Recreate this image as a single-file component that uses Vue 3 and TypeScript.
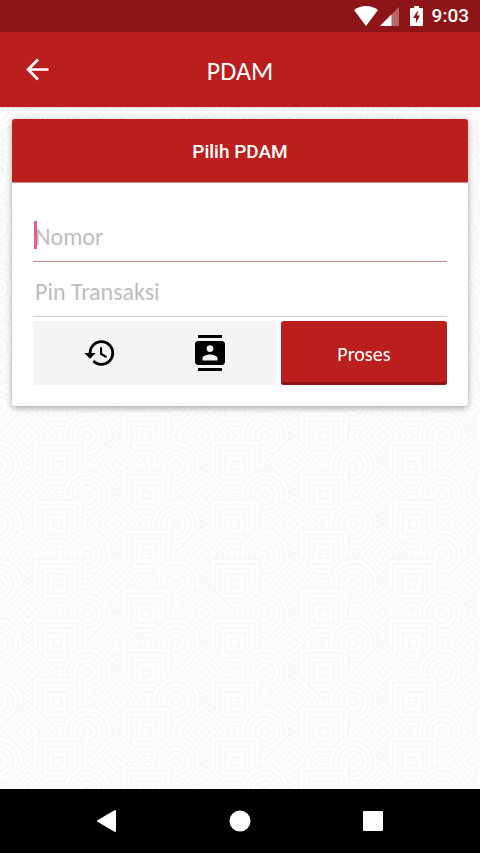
<script setup lang="ts">
import { ref } from 'vue'

type Shape = { kind: 'diamond' | 'square' | 'circle'; x: number; y: number }

const nomor = ref('')
const pin = ref('')

const kinds: Shape['kind'][] = ['diamond', 'square', 'circle']
const rings = [25, 20, 15, 10, 4]

// Shapes overlap like roof tiles, so they are listed from top to bottom.
const shapes: Shape[] = []
for (let row = -2; row <= 4; row++) {
  for (let col = -2; col <= 8; col++) {
    if ((row + col) % 2 === 0) {
      shapes.push({ kind: kinds[(col + 3) % 3], x: col * 30, y: row * 30 })
    }
  }
}

function diamond(x: number, y: number, r: number): string {
  const d = r * 1.25
  return `M${x} ${y - d}L${x + d} ${y}L${x} ${y + d}L${x - d} ${y}Z`
}
</script>

<template>
  <div class="screen">
    <div class="status">
      <svg class="wifi" viewBox="0 0 24 20" aria-hidden="true">
        <path d="M12 20L0 4C7-1.300 17-1.300 24 4Z" />
      </svg>
      <svg class="signal" viewBox="0 0 19 19" aria-hidden="true">
        <path d="M19 0V19H0Z" opacity=".35" />
        <path d="M11.500 7.500V19H0Z" />
      </svg>
      <svg class="battery" viewBox="0 0 13 20" aria-hidden="true">
        <path d="M4 0H9V2H12Q13 2 13 3V19Q13 20 12 20H1Q0 20 0 19V3Q0 2 1 2H4Z" />
        <path class="bolt" d="M8 4L3 12H6V17L10 9.500H7.200Z" />
      </svg>
      <time class="clock">9:03</time>
    </div>

    <header class="bar">
      <button class="back" type="button" aria-label="Kembali">
        <svg viewBox="0 0 24 24" aria-hidden="true"><path d="M22.500 11.500H2.500M12 1.500L2 11.500L12 21.500" /></svg>
      </button>
      <h1>PDAM</h1>
    </header>

    <main>
      <svg class="backdrop" aria-hidden="true">
        <defs>
          <pattern id="tiles" width="180" height="60" patternUnits="userSpaceOnUse" patternTransform="translate(28 33) scale(.986)">
            <template v-for="(s, i) in shapes" :key="i">
              <template v-for="r in rings" :key="r">
                <circle v-if="s.kind === 'circle'" :cx="s.x" :cy="s.y" :r="r" />
                <rect v-else-if="s.kind === 'square'" :x="s.x - r" :y="s.y - r" :width="r * 2" :height="r * 2" />
                <path v-else :d="diamond(s.x, s.y, r)" />
              </template>
            </template>
          </pattern>
        </defs>
        <rect class="fill" width="100%" height="100%" fill="url(#tiles)" />
      </svg>

      <section class="card">
        <button class="choose" type="button">Pilih PDAM</button>
        <form @submit.prevent>
          <div class="field active">
            <input v-model="nomor" type="text" inputmode="numeric" placeholder="Nomor" aria-label="Nomor" />
            <span class="caret"></span>
          </div>
          <div class="field">
            <input v-model="pin" type="password" placeholder="Pin Transaksi" aria-label="Pin Transaksi" />
          </div>
          <div class="actions">
            <div class="tools">
              <button type="button" aria-label="Riwayat">
                <svg class="history" viewBox="0 0 24 24" aria-hidden="true">
                  <path d="M13 3a9 9 0 0 0-9 9H1l3.890 3.890.070.140L9 12H6c0-3.870 3.130-7 7-7s7 3.130 7 7-3.130 7-7 7c-1.930 0-3.680-.790-4.940-2.060l-1.420 1.420A8.954 8.954 0 0 0 13 21a9 9 0 0 0 0-18zm-1 5v5l4.280 2.540.720-1.210-3.500-2.080V8H12z" />
                </svg>
              </button>
              <button type="button" aria-label="Kontak">
                <svg class="contacts" viewBox="0 0 24 24" aria-hidden="true">
                  <path d="M20 0H4v2h16V0zM4 24h16v-2H4v2zM20 4H4c-1.100 0-2 .900-2 2v12c0 1.100.900 2 2 2h16c1.100 0 2-.900 2-2V6c0-1.100-.900-2-2-2zm-8 2.750a2.250 2.250 0 1 1 0 4.500 2.250 2.250 0 0 1 0-4.500zM17 17H7v-1.500c0-1.670 3.330-2.500 5-2.500s5 .830 5 2.500V17z" />
                </svg>
              </button>
            </div>
            <button class="submit" type="submit">Proses</button>
          </div>
        </form>
      </section>
    </main>

    <nav>
      <button type="button" aria-label="Back"><svg viewBox="0 0 24 24"><path d="M20 2V22L3 12Z" /></svg></button>
      <button type="button" aria-label="Home"><svg viewBox="0 0 24 24"><circle cx="12" cy="12" r="9.500" /></svg></button>
      <button type="button" aria-label="Overview"><svg viewBox="0 0 24 24"><rect x="3" y="3" width="18" height="18" /></svg></button>
    </nav>
  </div>
</template>

<style>
body {
  margin: 0;
}
</style>

<style scoped>
.screen {
  display: flex;
  flex-direction: column;
  min-height: 100vh;
  font-family: Carlito, "Noto Sans", sans-serif;
  background: #fff;
}

button {
  margin: 0;
  padding: 0;
  border: 0;
  background: none;
  font-family: inherit;
  color: inherit;
  cursor: pointer;
}

svg {
  display: block;
}

.status {
  display: flex;
  align-items: center;
  justify-content: flex-end;
  height: 32px;
  padding-right: 11px;
  background: #8d1517;
  color: #fff;
  fill: #fff;
}

.wifi {
  width: 24px;
  height: 20px;
  margin-right: 2px;
}

.signal {
  width: 19px;
  height: 19px;
  margin-right: 11px;
}

.battery {
  width: 13px;
  height: 20px;
  margin-right: 9px;
}

.bolt {
  fill: #8d1517;
}

.clock {
  font: 500 19px/32px Roboto, sans-serif;
}

.bar {
  position: relative;
  z-index: 1;
  display: grid;
  grid-template-columns: 75px 1fr 75px;
  align-items: center;
  height: 75px;
  background: #ba1e1d;
  color: #fff;
  box-shadow: 0 1px 2px rgba(0, 0, 0, 0.15);
}

.back {
  display: grid;
  place-items: center;
  height: 75px;
}

.back svg {
  width: 24px;
  height: 24px;
  fill: none;
  stroke: #fff;
  stroke-width: 2.6;
}

h1 {
  margin: 0;
  padding-top: 2px;
  text-align: center;
  font-size: 26px;
  font-weight: 400;
  line-height: 32px;
}

main {
  position: relative;
  flex: 1;
  padding: 12px;
}

.backdrop {
  position: absolute;
  inset: 0;
  width: 100%;
  height: 100%;
}

.backdrop pattern {
  fill: #fefefe;
  stroke: #f8f8f8;
  stroke-width: 2;
}

.card {
  position: relative;
  overflow: hidden;
  border-radius: 3px;
  background: #fff;
  box-shadow: 0 2px 6px rgba(0, 0, 0, 0.35);
}

.choose {
  display: block;
  width: 100%;
  height: 64px;
  padding-top: 2px;
  border-bottom: 1px solid #d98a8a;
  background: #ba1e1d;
  color: #fff;
  font: 500 19px/24px Roboto, sans-serif;
}

form {
  padding: 24px 21px 21px;
}

.field {
  position: relative;
  border-bottom: 1px solid #d2d2d2;
}

.field.active {
  border-bottom-color: #cc8282;
}

input {
  display: block;
  box-sizing: border-box;
  width: 100%;
  height: 54px;
  padding: 4px 2px 0;
  border: 0;
  outline: 0;
  background: transparent;
  font-family: inherit;
  font-size: 24px;
  color: #333;
}

input::placeholder {
  color: #bdbdbd;
  opacity: 1;
}

.caret {
  position: absolute;
  top: 14px;
  left: 1px;
  width: 3px;
  height: 28px;
  background: #e0608c;
}

.actions {
  display: grid;
  grid-template-columns: 22fr 15fr;
  gap: 4px;
  height: 64px;
  margin-top: 4px;
}

.tools {
  display: flex;
  padding: 0 12px;
  background: #f4f4f4;
}

.tools button {
  display: grid;
  flex: 1;
  place-items: center;
}

.history {
  width: 34px;
  height: 34px;
}

.contacts {
  width: 36px;
  height: 36px;
}

.submit {
  padding-top: 2px;
  border-radius: 3px;
  background: #ba1e1d;
  box-shadow: inset 0 -3px #8d1517;
  color: #fff;
  font-size: 20px;
}

nav {
  display: flex;
  align-items: center;
  justify-content: center;
  gap: 109px;
  height: 64px;
  background: #000;
}

nav svg {
  width: 24px;
  height: 24px;
  fill: #fff;
  stroke: #fff;
  stroke-width: 2;
  stroke-linejoin: round;
}
</style>
